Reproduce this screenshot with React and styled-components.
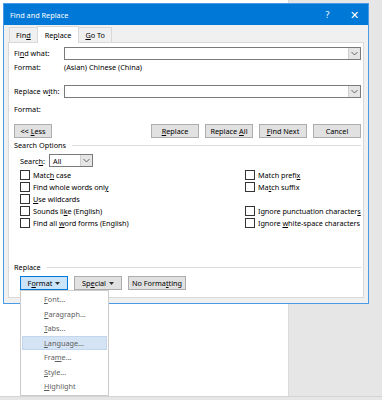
import React from "react";
import styled, { createGlobalStyle } from "styled-components";

const Global = createGlobalStyle`
    body {
        margin: 0;
        font-family: "Noto Sans", "Open Sans", sans-serif;
        font-size: 7.3px;
        color: #000;
    }
`
const Desktop = styled.div`
    position: relative;
    width: 382px;
    height: 400px;
    display: grid;
    grid-template-columns: 288px 1fr;
    grid-template-rows: 396px 1fr;
    overflow: hidden;
`
const DocArea = styled.div`
    background: #ffffff;
`
const SideArea = styled.div`
    background: #e6e6e6;
    border-left: 1px solid #dadada;
`
const BottomStrip = styled.div`
    grid-column: 1 / 3;
    background: #e6e6e6;
    border-top: 1px solid #d4d4d4;
`
const Dialog = styled.div`
    position: absolute;
    left: 3px;
    top: 3px;
    width: 364px;
    height: 299px;
    border: 1px solid #4a9be6;
    background: #f0f0f0;
    display: flex;
    flex-direction: column;
`
const TitleBar = styled.div`
    height: 21px;
    background: #0078d7;
    color: #fff;
    display: flex;
    align-items: center;
    padding: 0 0 0 6px;
`
const Title = styled.div`
    flex: 1;
`
const TitleBtn = styled.div`
    width: 27px;
    text-align: center;
    font-size: ${p => p.$size || 9}px;
`
const Tabs = styled.div`
    display: flex;
    align-items: flex-end;
    height: 17px;
    padding-left: 5px;
`
const Tab = styled.div`
    height: ${p => p.$active ? 16 : 14}px;
    padding: 0 ${p => p.$active ? 7 : 6}px;
    display: flex;
    align-items: center;
    background: ${p => p.$active ? "#fff" : "#f0f0f0"};
    border: 1px solid #d9d9d9;
    border-bottom: none;
    margin-right: -1px;
    position: relative;
    z-index: ${p => p.$active ? 2 : 1};
    margin-bottom: ${p => p.$active ? -1 : 0}px;
`
const Panel = styled.div`
    margin: 0 4px 0 4px;
    height: 251px;
    background: #fff;
    border: 1px solid #d9d9d9;
    padding: 3px 2px 0 5px;
    display: flex;
    flex-direction: column;
    white-space: nowrap;
`
const Row = styled.div`
    display: flex;
    align-items: ${p => p.$top ? "flex-start" : "center"};
    height: ${p => p.$h}px;
    flex-shrink: 0;
    padding-left: ${p => p.$indent || 0}px;
`
const Label = styled.div`
    width: ${p => p.$w || 50}px;
    flex-shrink: 0;
`
const ComboBox = styled.div`
    flex: 1;
    height: 13px;
    border: 1px solid #7a7a7a;
    box-sizing: border-box;
    display: flex;
    justify-content: flex-end;
`
const ArrowBox = styled.div`
    width: 11px;
    background: #e5e5e5;
    border-left: 1px solid #cfcfcf;
    display: flex;
    align-items: center;
    justify-content: center;
`
const Button = styled.button`
    font: inherit;
    color: #000;
    white-space: nowrap;
    width: ${p => p.$w || 48}px;
    height: 14px;
    padding: 0;
    margin: 0;
    margin-left: ${p => p.$ml || 0}px;
    background: ${p => p.$active ? "#cce4f7" : "#e1e1e1"};
    border: 1px solid ${p => p.$active ? "#0078d7" : "#adadad"};
    display: flex;
    align-items: center;
    justify-content: center;
    gap: 3px;
`
const GroupTitle = styled.div`
    display: flex;
    align-items: center;
    gap: 6px;
    width: 100%;
    &::after {
        content: "";
        flex: 1;
        height: 1px;
        background: #dcdcdc;
    }
`
const Select = styled.div`
    width: 44px;
    height: 13px;
    box-sizing: border-box;
    border: 1px solid #7a7a7a;
    display: flex;
    margin-left: 4px;
`
const SelectValue = styled.div`
    flex: 1;
    padding-left: 3px;
    display: flex;
    align-items: center;
`
const OptionsGrid = styled.div`
    display: grid;
    grid-template-columns: 225px 1fr;
    grid-auto-rows: 12px;
    padding-left: 6px;
`
const Check = styled.div`
    display: flex;
    align-items: center;
    gap: 3px;
    letter-spacing: -0.05px;
`
const Box = styled.span`
    width: 8px;
    height: 8px;
    border: 1px solid #333;
    background: #fff;
    flex-shrink: 0;
`
const Spacer = styled.div`
    flex: 1;
`
const Menu = styled.div`
    position: absolute;
    left: 20px;
    top: 290px;
    width: 85px;
    padding: 1px;
    background: #fff;
    border: 1px solid #cccccc;
    display: flex;
    flex-direction: column;
    z-index: 5;
`
const MenuItem = styled.div`
    height: 12.5px;
    display: flex;
    align-items: center;
    padding-left: 21px;
    color: #5e5e5e;
    background: ${p => p.$hover ? "#d5e4f5" : "transparent"};
    border: 1px solid ${p => p.$hover ? "#c2d7ee" : "transparent"};
`

const Chevron = () => (
    <svg width="7" height="5" viewBox="0 0 7 5">
        <path d="M0.5 1 L3.5 4 L6.5 1" fill="none" stroke="#555" strokeWidth="0.9" />
    </svg>
)
const Caret = () => (
    <svg width="5" height="3" viewBox="0 0 5 3">
        <path d="M0 0 L5 0 L2.5 3 Z" fill="#333" />
    </svg>
)

// text with one underlined access key
const K = ({ t, k }) => {
    const i = t.indexOf(k);
    if (i < 0) return <span>{t}</span>;
    return (
        <span>
            {t.slice(0, i)}<u>{k}</u>{t.slice(i + k.length)}
        </span>
    )
}

const leftOpts = [
    ["Match case", "h"],
    ["Find whole words only", "y"],
    ["Use wildcards", "U"],
    ["Sounds like (English)", "k"],
    ["Find all word forms (English)", "w"],
]
const rightOpts = [
    ["Match prefix", "x"],
    ["Match suffix", "t"],
    null,
    ["Ignore punctuation characters", "s"],
    ["Ignore white-space characters", "w"],
]
const menuItems = [
    ["Font...", "F"],
    ["Paragraph...", "P"],
    ["Tabs...", "T"],
    ["Language...", "L"],
    ["Frame...", "m"],
    ["Style...", "S"],
    ["Highlight", "H"],
]

const App = () => {
    return (
        <>
            <Global />
            <Desktop>
                <DocArea />
                <SideArea />
                <BottomStrip />
                <Dialog>
                    <TitleBar>
                        <Title>Find and Replace</Title>
                        <TitleBtn>?</TitleBtn>
                        <TitleBtn $size={11}>✕</TitleBtn>
                    </TitleBar>
                    <Tabs>
                        <Tab><K t="Find" k="d" /></Tab>
                        <Tab $active><K t="Replace" k="p" /></Tab>
                        <Tab><K t="Go To" k="G" /></Tab>
                    </Tabs>
                    <Panel>
                        <Row $h={14}>
                            <Label><K t="Find what:" k="n" /></Label>
                            <ComboBox><ArrowBox><Chevron /></ArrowBox></ComboBox>
                        </Row>
                        <Row $h={14}>
                            <Label>Format:</Label>
                            <div>(Asian) Chinese (China)</div>
                        </Row>
                        <Row $h={10} />
                        <Row $h={14}>
                            <Label><K t="Replace with:" k="i" /></Label>
                            <ComboBox><ArrowBox><Chevron /></ArrowBox></ComboBox>
                        </Row>
                        <Row $h={22}>
                            <Label>Format:</Label>
                        </Row>
                        <Row $h={4} />
                        <Row $h={14}>
                            <Button $w={38}><K t="<< Less" k="L" /></Button>
                            <Spacer />
                            <Button><K t="Replace" k="R" /></Button>
                            <Button $ml={6}><K t="Replace All" k="A" /></Button>
                            <Button $ml={6}><K t="Find Next" k="F" /></Button>
                            <Button $ml={6}>Cancel</Button>
                        </Row>
                        <Row $h={14}>
                            <GroupTitle>Search Options</GroupTitle>
                        </Row>
                        <Row $h={17} $indent={6}>
                            <K t="Search:" k="h" />
                            <Select>
                                <SelectValue>All</SelectValue>
                                <ArrowBox><Chevron /></ArrowBox>
                            </Select>
                        </Row>
                        <OptionsGrid>
                            {leftOpts.map((o, i) => (
                                <React.Fragment key={i}>
                                    <Check><Box /><K t={o[0]} k={o[1]} /></Check>
                                    {rightOpts[i]
                                        ? <Check><Box /><K t={rightOpts[i][0]} k={rightOpts[i][1]} /></Check>
                                        : <div />}
                                </React.Fragment>
                            ))}
                        </OptionsGrid>
                        <Spacer />
                        <Row $h={10}>
                            <GroupTitle>Replace</GroupTitle>
                        </Row>
                        <Row $h={4} />
                        <Row $h={14} $indent={6}>
                            <Button $active><K t="Format" k="o" /><Caret /></Button>
                            <Button $ml={6}><K t="Special" k="e" /><Caret /></Button>
                            <Button $ml={6} $w={58}><K t="No Formatting" k="t" /></Button>
                        </Row>
                        <Row $h={7} />
                    </Panel>
                </Dialog>
                <Menu>
                    {menuItems.map((m, i) => (
                        <MenuItem key={i} $hover={m[0] === "Language..."}>
                            <K t={m[0]} k={m[1]} />
                        </MenuItem>
                    ))}
                </Menu>
            </Desktop>
        </>
    )
}
export default App;
